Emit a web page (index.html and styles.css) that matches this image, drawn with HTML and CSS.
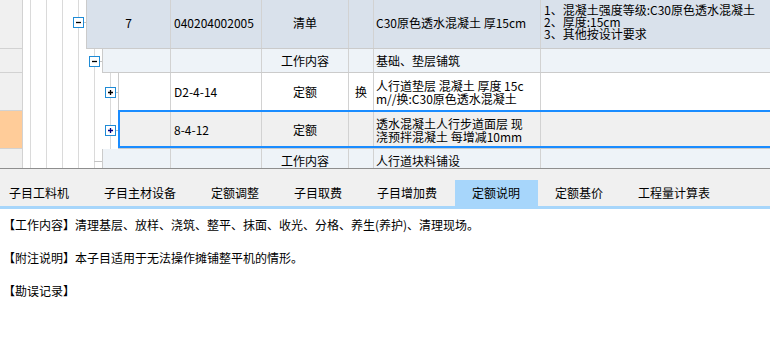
FILE: index.html
```html
<!DOCTYPE html>
<html lang="zh-CN">
<head>
<meta charset="utf-8">
<title>定额说明</title>
<link rel="stylesheet" href="styles.css">
</head>
<body>
<div class="grid">
  <div class="rows">
    <div class="row r1 l0">
      <div class="rh"></div>
      <div class="indent">
        <span class="node"><svg class="box" width="11" height="11" viewBox="0 0 11 11"><rect x="0.5" y="0.5" width="10" height="10" fill="#fff" stroke="#1f8bd6"/><path d="M3 5.5h5" stroke="#000" stroke-width="1.3"/></svg><i class="conn"></i></span>
      </div>
      <div class="cells">
        <div class="c c-no">7</div>
        <div class="c c-code">040204002005</div>
        <div class="c c-type">清单</div>
        <div class="c c-sw"></div>
        <div class="c c-name">C30原色透水混凝土 厚15cm</div>
        <div class="c c-feat">1、混凝土强度等级:C30原色透水混凝土<br>2、厚度:15cm<br>3、其他按设计要求</div>
      </div>
    </div>
    <div class="row r2 l1">
      <div class="rh"></div>
      <div class="indent">
        <span class="node"><svg class="box" width="11" height="11" viewBox="0 0 11 11"><rect x="0.5" y="0.5" width="10" height="10" fill="#fff" stroke="#1f8bd6"/><path d="M3 5.5h5" stroke="#000" stroke-width="1.3"/></svg><i class="conn"></i></span>
      </div>
      <div class="cells">
        <div class="c c-no"></div>
        <div class="c c-code"></div>
        <div class="c c-type">工作内容</div>
        <div class="c c-sw"></div>
        <div class="c c-name">基础、垫层铺筑</div>
        <div class="c c-feat"></div>
      </div>
    </div>
    <div class="row r3 l2">
      <div class="rh"></div>
      <div class="indent">
        <span class="node"><svg class="box" width="11" height="11" viewBox="0 0 11 11"><rect x="0.5" y="0.5" width="10" height="10" fill="#fff" stroke="#1f8bd6"/><path d="M3 5.5h5M5.5 3v5" stroke="#000" stroke-width="1.3"/></svg><i class="conn"></i></span>
      </div>
      <div class="cells">
        <div class="c c-no"></div>
        <div class="c c-code">D2-4-14</div>
        <div class="c c-type">定额</div>
        <div class="c c-sw">换</div>
        <div class="c c-name">人行道垫层 混凝土 厚度 15c<br>m//换:C30原色透水混凝土</div>
        <div class="c c-feat"></div>
      </div>
    </div>
    <div class="row r4 l2">
      <div class="rh sel"></div>
      <div class="indent">
        <span class="node"><svg class="box" width="11" height="11" viewBox="0 0 11 11"><rect x="0.5" y="0.5" width="10" height="10" fill="#fff" stroke="#1f8bd6"/><path d="M3 5.5h5M5.5 3v5" stroke="#000080" stroke-width="1.3"/></svg><i class="conn"></i></span>
      </div>
      <div class="cells">
        <div class="c c-no"></div>
        <div class="c c-code">8-4-12</div>
        <div class="c c-type">定额</div>
        <div class="c c-sw"></div>
        <div class="c c-name">透水混凝土人行步道面层 现<br>浇预拌混凝土 每增减10mm</div>
        <div class="c c-feat"></div>
      </div>
    </div>
    <div class="row r5 l1">
      <div class="rh"></div>
      <div class="indent">
        <span class="node leaf"><i class="conn long"></i></span>
      </div>
      <div class="cells">
        <div class="c c-no"></div>
        <div class="c c-code"></div>
        <div class="c c-type">工作内容</div>
        <div class="c c-sw"></div>
        <div class="c c-name">人行道块料铺设</div>
        <div class="c c-feat"></div>
      </div>
    </div>
  </div>
</div>
<div class="tabbar">
  <div class="tab first">子目工料机</div>
  <div class="tab">子目主材设备</div>
  <div class="tab">定额调整</div>
  <div class="tab">子目取费</div>
  <div class="tab">子目增加费</div>
  <div class="tab active">定额说明</div>
  <div class="tab">定额基价</div>
  <div class="tab">工程量计算表</div>
</div>
<div class="content">
  <p>【工作内容】清理基层、放样、浇筑、整平、抹面、收光、分格、养生(养护)、清理现场。</p>
  <p>【附注说明】本子目适用于无法操作摊铺整平机的情形。</p>
  <p>【勘误记录】</p>
</div>
</body>
</html>
```
FILE: styles.css
```css
* { box-sizing: border-box; }
html, body {
  margin: 0;
  padding: 0;
  width: 770px;
  height: 344px;
  overflow: hidden;
  background: #fff;
  font-family: "Noto Sans CJK SC", "Noto Sans", sans-serif;
  font-size: 12px;
  color: #000;
}

/* ---------- grid ---------- */
.grid {
  height: 168px;
  overflow: hidden;
  background-color: #fff;
  background-image: repeating-linear-gradient(to right, #dadada 0 1px, transparent 1px 16px);
  background-position: 30px 0;
  background-size: 81px 100%;
  background-repeat: no-repeat;
}
.rows { margin-top: -4px; width: 820px; }
.row { display: flex; }
.r1 { height: 53px; }
.r2 { height: 24px; }
.r3 { height: 38px; }
.r4 { height: 38px; }
.r5 { height: 24px; }

.rh {
  flex: 0 0 23px;
  background: #f0f0f0;
  border-right: 1px solid #d2d2d2;
  border-bottom: 1px solid #d2d2d2;
}
.rh.sel { background: #ffcc99; }

.indent {
  display: flex;
  justify-content: flex-end;
  align-items: center;
}
.l0 .indent { flex: 0 0 63px; }
.l1 .indent { flex: 0 0 79px; }
.l2 .indent { flex: 0 0 95px; }

.node {
  width: 16px;
  display: flex;
  align-items: center;
  padding-left: 3px;
}
.node.leaf { padding-left: 8px; }
.box { display: block; flex: 0 0 11px; }
.conn {
  display: block;
  height: 1px;
  width: 2px;
  background: #c4c4c4;
}
.conn.long { width: 8px; }

.cells {
  position: relative;
  display: flex;
  flex: 0 0 auto;
  border-left: 1px solid #cbcbcb;
  border-bottom: 1px solid #cbcbcb;
  background: #fff;
}
.r1 .cells { background: #d9e1eb; }
.r2 .cells, .r5 .cells { background: #eef3f8; }
.r4 .cells { background: #f0f0f0; }
.r4 .cells::after {
  content: "";
  position: absolute;
  top: -1px;
  left: -1px;
  right: 0;
  bottom: 0;
  border: 2px solid #1a8cff;
  border-right: 0;
}

.c {
  display: flex;
  align-items: center;
  border-right: 1px solid #d2d2d2;
  white-space: nowrap;
  overflow: hidden;
  line-height: 13px;
}
.l0 .c-no { width: 84px; }
.l1 .c-no { width: 68px; }
.l2 .c-no { width: 52px; }
.c-no { justify-content: center; }
.c-code { width: 91px; padding-left: 3px; }
.c-type { width: 87px; justify-content: center; }
.c-sw { width: 25px; justify-content: center; }
.c-name { width: 167px; padding-left: 2px; }
.c-feat { width: 260px; padding-left: 3px; line-height: 12px; }

/* ---------- tabs ---------- */
.tabbar {
  display: flex;
  align-items: flex-end;
  height: 41px;
  background: #f0f0f0;
  border-top: 1px solid #8e8e8e;
  border-bottom: 3px solid #a7d6fb;
}
.tab {
  height: 26px;
  line-height: 26px;
  padding: 0 17.5px;
  white-space: nowrap;
  color: #000;
}
.tab.first { padding-left: 9px; }
.tab.active { background: #a7d6fb; }

/* ---------- content ---------- */
.content { padding: 7px 3px 0; }
.content p {
  margin: 0 0 16px;
  line-height: 17px;
}
```
